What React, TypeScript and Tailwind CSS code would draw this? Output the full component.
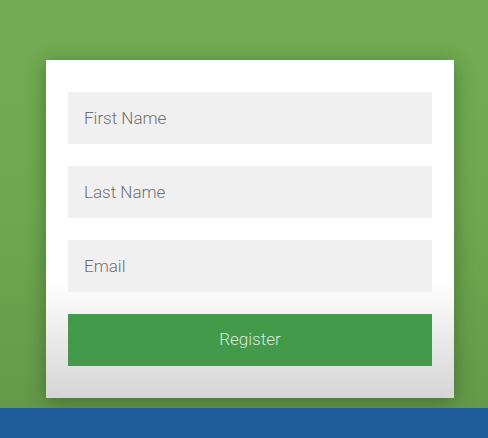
import React from 'react';

const fields = ['First Name', 'Last Name', 'Email'];

export default function App() {
  return (
    <div className="w-[488px] h-[438px] overflow-hidden flex flex-col bg-[#72ab53]" style={{ fontFamily: 'Roboto, "Noto Sans", sans-serif' }}>
      {/* green stage */}
      <div className="h-[408px] shrink-0 pt-[60px] pl-[46px] flex bg-gradient-to-b from-[#72ab53] via-[#6fa850] to-[#64994a]">
        <form
          className="w-[408px] h-[338px] px-[22px] pt-[32px] flex flex-col gap-[22px] bg-gradient-to-b from-white from-65% to-[#d5d5d5] shadow-[0_4px_18px_rgba(30,60,20,0.45)]"
          onSubmit={e => e.preventDefault()}
        >
          {fields.map(f => (
            <input
              key={f}
              type="text"
              placeholder={f}
              className="h-[52px] w-full bg-[#f0f0f0] px-4 text-[17px] font-light text-[#555] placeholder-[#707070] outline-none"
            />
          ))}
          <button className="h-[52px] w-full bg-[#429a4a] text-[17px] font-light text-[#d7ecd6]">
            Register
          </button>
        </form>
      </div>

      {/* bottom banner */}
      <div className="h-[30px] shrink-0 bg-[#1f5c99] overflow-hidden pt-[27px] pl-[2px]">
        <p className="text-[42px] leading-none font-bold text-white whitespace-nowrap tracking-wide">
          Subscribe and like the video
        </p>
      </div>
    </div>
  );
}
